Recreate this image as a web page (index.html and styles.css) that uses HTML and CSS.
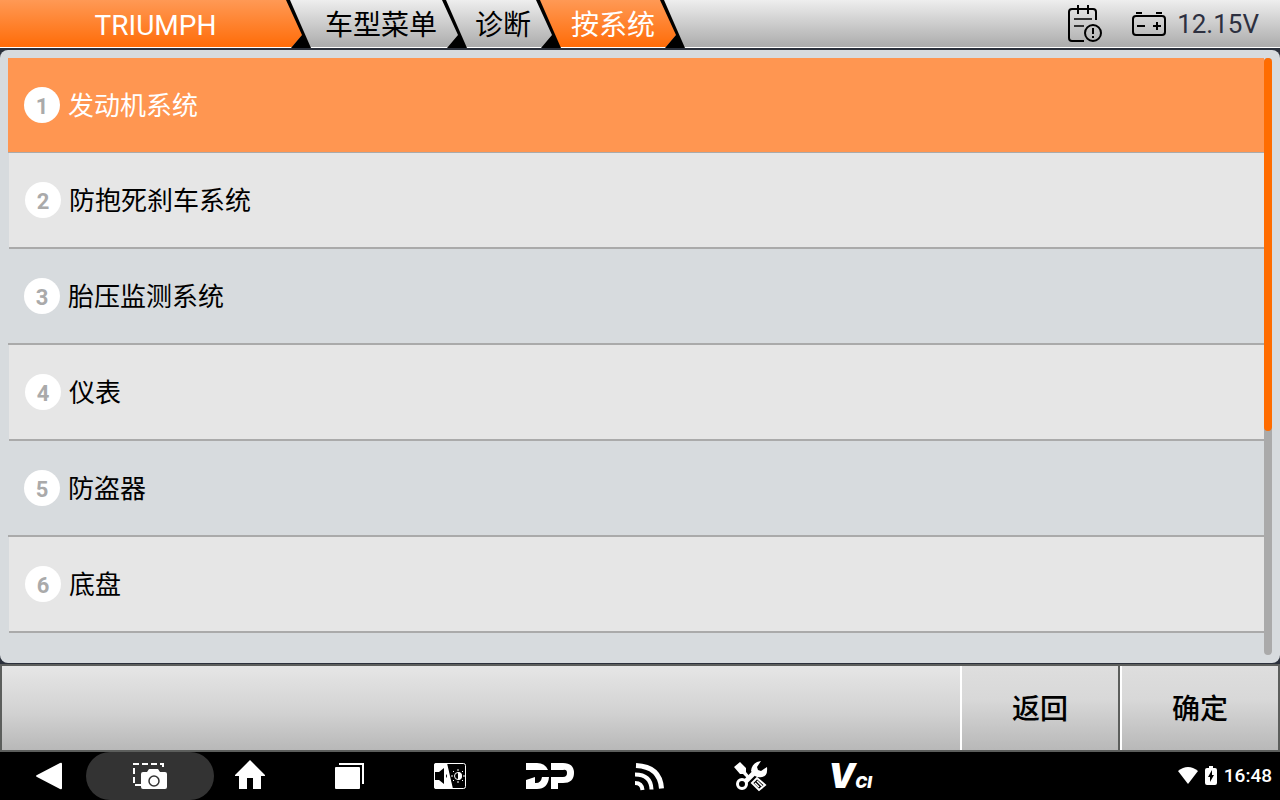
FILE: index.html
```html
<!DOCTYPE html>
<html lang="zh-CN">
<head>
    <meta charset="UTF-8">
    <meta name="viewport" content="width=device-width, initial-scale=1.0">
    <title>TRIUMPH - 按系统</title>
    <link rel="stylesheet" href="styles.css">
</head>
<body>
    <header class="header">
        <nav class="crumbs">
            <a class="crumb crumb-brand active" href="#">TRIUMPH</a>
            <svg class="sep" viewBox="0 0 25 48">
                <defs>
                    <linearGradient id="orange" gradientUnits="userSpaceOnUse" x1="0" y1="0" x2="0" y2="47">
                        <stop offset="0" stop-color="#ff9955"/>
                        <stop offset="1" stop-color="#ff6c08"/>
                    </linearGradient>
                </defs>
                <path class="fill" d="M0 0h3l14 34-11 13H0z"/>
                <path d="M0 0h4l21 48H5l11-13z"/>
            </svg>
            <a class="crumb crumb-menu" href="#">车型菜单</a>
            <svg class="sep" viewBox="0 0 25 48"><path d="M0 0h4l21 48H5l11-13z"/></svg>
            <a class="crumb crumb-diag" href="#">诊断</a>
            <svg class="sep" viewBox="0 0 25 48">
                <path class="fill" d="M3 0h22v47h-1z"/>
                <path d="M0 0h4l21 48H5l11-13z"/>
            </svg>
            <a class="crumb crumb-system active" href="#">按系统</a>
            <svg class="sep" viewBox="0 0 25 48">
                <path class="fill" d="M0 0h3l14 34-11 13H0z"/>
                <path d="M0 0h4l21 48H5l11-13z"/>
            </svg>
        </nav>
        <div class="info">
            <button class="log-btn" aria-label="日志">
                <svg width="36" height="40" viewBox="0 0 36 40" fill="none" stroke="#000" stroke-width="2">
                    <path d="M17 37H5q-3 0-3-3V8q0-3 3-3h21q3 0 3 3v8"/>
                    <path d="M11 1v9M21 1v9"/>
                    <path d="M7 15h18M7 22h10" stroke="#333"/>
                    <circle cx="26" cy="29" r="8"/>
                    <path d="M26 24v6M26 32v2"/>
                </svg>
            </button>
            <svg class="battery" width="36" height="26" viewBox="0 0 36 26" fill="none" stroke="#000" stroke-width="2">
                <rect x="2" y="5" width="32" height="19" rx="3"/>
                <path d="M5 2h6M25 2h6M6 15h8M22 15h8M26 11v8"/>
            </svg>
            <span class="voltage">12.15V</span>
        </div>
    </header>

    <main class="panel">
        <ul class="list">
            <li><button class="row selected"><span class="num">1</span><span class="name">发动机系统</span></button></li>
            <li><button class="row"><span class="num">2</span><span class="name">防抱死刹车系统</span></button></li>
            <li><button class="row"><span class="num">3</span><span class="name">胎压监测系统</span></button></li>
            <li><button class="row"><span class="num">4</span><span class="name">仪表</span></button></li>
            <li><button class="row"><span class="num">5</span><span class="name">防盗器</span></button></li>
            <li><button class="row"><span class="num">6</span><span class="name">底盘</span></button></li>
        </ul>
        <div class="track"><div class="thumb"></div></div>
    </main>

    <div class="actions">
        <button class="action">返回</button>
        <button class="action">确定</button>
    </div>

    <footer class="navbar">
        <button class="nav-btn" aria-label="后退">
            <svg viewBox="0 0 48 48"><path d="M11 23 34 11q2-1 2 1v24q0 2-2 1L11 25q-2-1 0-2z"/></svg>
        </button>
        <button class="nav-btn pill" aria-label="截屏">
            <svg viewBox="0 0 48 48">
                <path d="M15 33H8V12h29v6" fill="none" stroke="#fff" stroke-width="2" stroke-dasharray="6 3"/>
                <path d="M17 20h4l2-3h9l2 3h5q2 0 2 2v13q0 2-2 2H17q-2 0-2-2V22q0-2 2-2z"/>
                <circle cx="28" cy="29" r="5" fill="none" stroke="#333" stroke-width="1.5"/>
            </svg>
        </button>
        <button class="nav-btn" aria-label="主页">
            <svg viewBox="0 0 48 48"><path d="M24 8 39 23v1h-4v13h-8V26h-6v11h-8V24H9v-1z"/></svg>
        </button>
        <button class="nav-btn" aria-label="最近任务">
            <svg viewBox="0 0 48 48">
                <rect x="9" y="15" width="25" height="22" rx="1"/>
                <path d="M13 12h24v20" fill="none" stroke="#fff" stroke-width="2"/>
            </svg>
        </button>
        <button class="nav-btn" aria-label="音量和亮度">
            <svg viewBox="0 0 48 48">
                <rect x="8.5" y="11.5" width="31" height="25" rx="2" fill="none" stroke="#fff"/>
                <path d="M10 11h11l6 26H10q-2 0-2-2V13q0-2 2-2z"/>
                <path d="M9 20h4l5-4v16l-5-4H9zM20 22q2 2 0 4z" fill="#000"/>
                <circle cx="32" cy="24" r="3.5" fill="none" stroke="#fff"/>
                <path d="M32 20a4 4 0 0 1 0 8z"/>
                <path d="M32 17v2M32 29v2M25 24h2M37 24h2M27 19l1 1M37 19l-1 1M27 29l1-1M37 29l-1-1" stroke="#fff"/>
            </svg>
        </button>
        <button class="nav-btn" aria-label="DP">
            <!-- brand mark, sliced through the middle -->
            <svg viewBox="0 0 48 48">
                <path d="M0 11h11q8 0 11 7H0z"/>
                <path d="M9 25v6h1q5 0 6-6h7q-1 12-12 12H0v-9z"/>
                <path d="M25 11h12q11 0 11 10T37 31h-5v6h-7V25h12q4 0 4-4t-4-3H25z"/>
            </svg>
        </button>
        <button class="nav-btn" aria-label="信号">
            <svg viewBox="0 0 48 48" class="strokes">
                <path d="M10 13.5q24 1 25.5 23" stroke-width="5"/>
                <path d="M9 22.5q16 0 16.5 15" stroke-width="4"/>
                <path d="M9 31q7 0 7.5 7" stroke-width="4"/>
            </svg>
        </button>
        <button class="nav-btn" aria-label="工具">
            <svg viewBox="0 0 48 48">
                <path d="M8 15l6-5 6 6v4l4 5-2 2-5-5h-3z"/>
                <path d="M19 30 31 18" stroke="#fff" stroke-width="5"/>
                <circle cx="16" cy="32" r="4.5" fill="none" stroke="#fff" stroke-width="3"/>
                <path d="M35 9l-4 6 1 3 3 1 6-4q1 9-5 10-4 1-7-1l-4-5q1-9 10-10z"/>
                <path d="M26 31l5-5 8 7-6 5z" fill="none" stroke="#fff" stroke-width="2"/>
                <path d="M29 31l4 4M31 29l5 5" stroke="#fff" stroke-width="1.5"/>
            </svg>
        </button>
        <button class="nav-btn" aria-label="VCI">
            <span class="vci">V<small>CI</small></span>
        </button>
        <div class="status">
            <svg width="20" height="20" viewBox="0 0 20 20"><path d="M0 5q10-8 20 0L10 18z"/></svg>
            <svg width="12" height="20" viewBox="0 0 12 20">
                <path d="M4 0h4v2h2q2 0 2 2v13q0 2-2 2H2q-2 0-2-2V4q0-2 2-2h2z"/>
                <path d="M7 4 3 11h2v5l4-7H7z" fill="#000"/>
            </svg>
            <span class="clock">16:48</span>
        </div>
    </footer>
</body>
</html>
```
FILE: styles.css
```css
* {
    box-sizing: border-box;
}

body {
    margin: 0;
    height: 100vh;
    display: flex;
    flex-direction: column;
    background-color: #2b303b;
    font-family: Roboto, "Noto Sans CJK SC", sans-serif;
    color: #000;
    overflow: hidden;
}

button {
    font: inherit;
    color: inherit;
    border: none;
    padding: 0;
    background: none;
    cursor: pointer;
}

svg {
    display: block;
    flex: none;
}

/* header */
.header {
    display: flex;
    justify-content: space-between;
    height: 48px;
    margin-bottom: 2px;
    background: linear-gradient(#eee, #aaa);
    box-shadow: inset 0 -1px #fff;
}

.crumbs {
    display: flex;
}

.crumb {
    height: 47px;
    padding-right: 5px;
    font-size: 28px;
    line-height: 52px;
    text-align: right;
    text-decoration: none;
    white-space: nowrap;
    color: #000;
}

.crumb.active {
    color: #fff;
    background: linear-gradient(#ff9955, #ff6c08);
}

.crumb-brand {
    width: 286px;
    padding: 0 0 0 25px;
    text-align: center;
}

.crumb-menu {
    width: 131px;
}

.crumb-diag {
    width: 69px;
}

.crumb-system {
    width: 99px;
}

.sep {
    width: 25px;
    height: 48px;
}

.sep .fill {
    fill: url(#orange);
}

.info {
    display: flex;
    align-items: center;
    padding-right: 21px;
}

.log-btn {
    margin-right: 28px;
}

.battery {
    margin-right: 10px;
}

.voltage {
    font-size: 26px;
    line-height: 52px;
    color: #2d3040;
}

/* system list */
.panel {
    flex: 1;
    min-height: 0;
    display: flex;
    padding: 8px;
    border-radius: 8px;
    background-color: #d7dbde;
}

.list {
    flex: 1;
    margin: 0;
    padding: 0;
    list-style: none;
    overflow: hidden;
}

.row {
    display: flex;
    align-items: center;
    gap: 8px;
    width: 100%;
    height: 96px;
    padding: 0 16px;
    border-bottom: 2px solid #aaa;
    font-size: 26px;
    text-align: left;
}

.list li:nth-child(even) {
    padding-left: 1px;
}

.list li:nth-child(even) .row {
    background-color: #e6e6e6;
}

.row.selected {
    height: 95px;
    border-bottom-width: 1px;
    background-color: #ff9651;
    color: #fff;
}

.num {
    width: 36px;
    height: 36px;
    border-radius: 50%;
    background-color: #fff;
    color: #aaa;
    font-size: 22px;
    font-weight: bold;
    line-height: 39px;
    text-align: center;
}

.name {
    padding-bottom: 4px;
}

.track {
    width: 8px;
    border-radius: 4px;
    background-color: #aaa;
}

.thumb {
    height: 62.4%;
    border-radius: 4px;
    background-color: #ff6c00;
}

/* bottom buttons */
.actions {
    display: flex;
    justify-content: flex-end;
    height: 88px;
    margin-top: 1px;
    border: 2px solid #5c5e5c;
    border-right: none;
    background: linear-gradient(#e6e6e6, #d2d2d2 55%, #b8b8b8);
}

.action {
    width: 160px;
    padding-bottom: 2px;
    border-left: 2px solid #fff;
    border-right: 2px solid #5c5e5c;
    background: linear-gradient(#dedede, #d8d8d8 40%, #b8b8b8);
    font-size: 28px;
    font-weight: 500;
}

/* android navigation bar */
.navbar {
    display: flex;
    height: 48px;
    background-color: #000;
    color: #fff;
}

.nav-btn {
    display: flex;
    align-items: center;
    justify-content: center;
    width: 100px;
    height: 48px;
}

.nav-btn.pill {
    width: 128px;
    margin: 0 -14px;
    border-radius: 24px;
    background-color: #333;
}

.navbar svg {
    fill: #fff;
}

.nav-btn svg {
    width: 48px;
    height: 48px;
}

.navbar svg.strokes {
    fill: none;
    stroke: #fff;
}

.vci {
    padding-top: 6px;
    font-family: Inter, sans-serif;
    font-size: 34px;
    font-weight: 900;
    font-style: italic;
    line-height: 48px;
}

.vci small {
    font-size: 16px;
}

.status {
    display: flex;
    align-items: center;
    gap: 7px;
    margin-left: auto;
    padding-right: 8px;
}

.clock {
    font-size: 19px;
    font-weight: 500;
    line-height: 50px;
}
```
